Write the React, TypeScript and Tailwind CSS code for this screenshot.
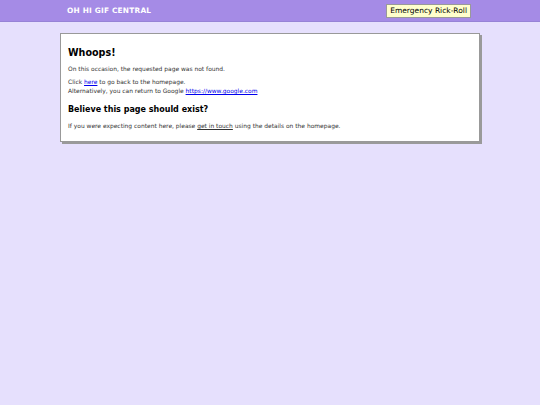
export default function App() {
  return (
    <div className="min-h-[405px] bg-[#e6e0fd] font-['DejaVu_Sans',Verdana,sans-serif] text-[#333]">
      {/* ── header ── */}
      <header className="flex h-[22px] items-center justify-between border-b border-[#9783d6] bg-[#a58be6] pl-[67px] pr-[69px]">
        <span className="text-[7.4px] font-bold tracking-[0.2px] text-white">OH HI GIF CENTRAL</span>
        <button
          type="button"
          className="h-[14px] border border-[#999] bg-[#ffffcc] px-[3px] text-[7.5px] leading-none text-black"
        >
          Emergency Rick-Roll
        </button>
      </header>

      {/* ── card ── */}
      <main className="pt-[11px] pl-[60px] pr-[60px]">
        <div className="border border-[#999] bg-white px-[7px] pt-[12px] pb-[11px] shadow-[2px_2px_0_#9a9a9a]">
          <h1 className="text-[9.6px] font-bold leading-[14px] text-black">Whoops!</h1>
          <p className="mt-[4px] text-[5.95px] leading-[9px]">On this occasion, the requested page was not found.</p>
          <p className="mt-[4px] text-[5.95px] leading-[9px]">
            Click <a href="#" className="text-[#0000ee] underline">here</a> to go back to the homepage.
            <br />
            Alternatively, you can return to Google{" "}
            <a href="#" className="text-[#0000ee] underline">https://www.google.com</a>
          </p>
          <h2 className="mt-[9px] text-[8px] font-bold leading-[12px] text-black">Believe this page should exist?</h2>
          <p className="mt-[5px] text-[5.95px] leading-[9px]">
            If you were expecting content here, please{" "}
            <a href="#" className="underline">get in touch</a> using the details on the homepage.
          </p>
        </div>
      </main>
    </div>
  );
}
